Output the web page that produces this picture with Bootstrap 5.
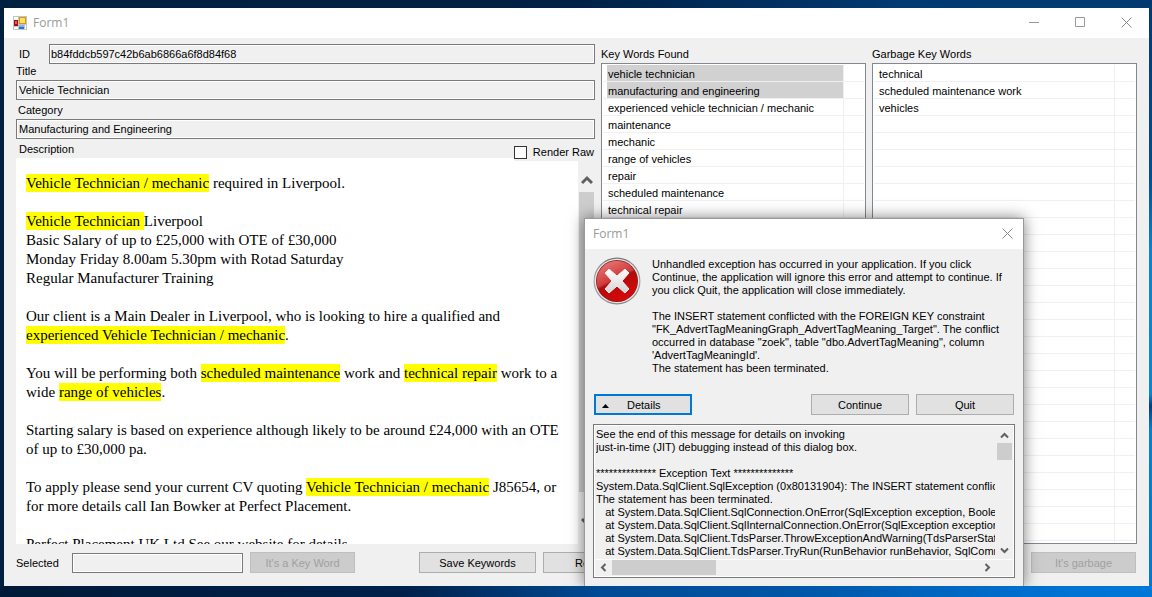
<!DOCTYPE html>
<html lang="en">
<head>
<meta charset="utf-8">
<meta name="viewport" content="width=device-width, initial-scale=1">
<title>Form1</title>
<link rel="stylesheet" href="https://cdn.jsdelivr.net/npm/bootstrap@5.3.0/dist/css/bootstrap.min.css">
<style>
  :root { --face: #f0f0f0; --edge: #7a7a7a; --thumb: #cdcdcd; --arrow: #606060; }
  body {
    font: 11px/13px "Liberation Sans", Arial, sans-serif;
    color: #000;
    padding: 8px 3px 11px 4px;
    background:
      linear-gradient(90deg, #001a38 0, #00204a 35%, #014a94 52%, #0157a8 70%, #0070d0 90%, #0078d8 100%) bottom / 100% 11px no-repeat,
      linear-gradient(#003a70 0, #004f95 30%, #0a84d0 42%, #0786d4 66%, #003f7e 68%, #0780d0 72%, #0078d8 100%) right / 3px 100% no-repeat,
      linear-gradient(90deg, #00203f 0, #002145 50%, #003a72 78%, #003a70 100%) #00203f;
  }
  .win { background: var(--face); }
  .title-bar { background: #fff; height: 30px; font: 12px/16px "Open Sans", "Segoe UI", sans-serif; color: #999; }
  .main-title { padding: 0 0 0 9px; gap: 6px; }
  .cap-btn { width: 46px; height: 30px; border: 0; padding: 0 0 2px; background: none; line-height: 0; }
  .main-title .cap-btn { margin-left: -6px; }
  .form-area { padding: 6px 12px 0 12px; gap: 6px; }
  .col-left { flex: 579 1 0; min-width: 0; }
  .col-list { flex: 265 1 0; min-width: 0; padding-top: 4px; }
  .box-input {
    height: 20px; width: 100%; min-width: 0; border: 1px solid var(--edge); border-radius: 0; outline: 0;
    background: var(--face); box-shadow: inset 0 0 0 1px #fff; padding: 0 2px; color: #000; font: inherit;
  }
  .id-label { width: 33px; padding-left: 3px; flex: none; }
  .id-label + .box-input { padding-left: 1px; }
  .title-label { line-height: 14px; padding-bottom: 2px; }
  .cat-label { line-height: 17px; padding: 2px 2px 0; }
  .desc-head { height: 19px; padding-left: 3px; line-height: 21px; }
  .raw-check { background: var(--face); height: 18px; margin-top: 4px; gap: 6px; padding-right: 1px; position: relative; }
  .raw-check input { appearance: none; width: 13px; height: 13px; border: 1px solid #333; background: #fff; margin: 0; }
  .desc { flex: 1 1 0; min-height: 0; background: #fff; overflow: hidden; }
  .desc-text { font: 15px/19px "Liberation Serif", "Times New Roman", serif; padding: 16px 10px 0; overflow: hidden; }
  .desc-text p { margin: 0 0 19px; }
  .desc-text mark { background: #ff0; padding: 1px 0; color: #000; }
  .vbar { width: 17px; flex: none; background: var(--face); color: var(--arrow); }
  .desc .vbar { padding: 15px 1px 15px; }
  .desc .thumb-v { height: 300px; margin: 5px 0 22px; }
  .thumb-v, .thumb-h { background: var(--thumb); }
  svg { display: block; flex: none; }
  .list-view { flex: 1 1 0; min-height: 0; margin-top: 2px; border: 1px solid #828790; background: #fff; padding: 1px; overflow: hidden; }
  .list-grid {
    height: 100%;
    background:
      linear-gradient(#f0f0f0, #f0f0f0) right 20px top / 1px 100% no-repeat,
      repeating-linear-gradient(transparent 0 16px, #f0f0f0 16px 17px);
  }
  .list-grid table { width: calc(100% - 21px); border-collapse: separate; border-spacing: 0; }
  .list-grid tr { height: 17px; }
  .list-grid td { padding: 0 0 1px 4px; height: 17px; white-space: nowrap; }
  .list-grid td span { display: block; padding: 3px 0 0 1px; height: 16px; }
  .list-grid .picked span { background: #d1d1d1; }
  .foot { padding: 7px 13px 13px 12px; height: 42px; gap: 7px; }
  .sel-label { width: 49px; line-height: 20px; flex: none; }
  .push-btn {
    height: 21px; border: 1px solid #adadad; background: #e1e1e1; color: #000; padding: 1px 0 0; border-radius: 0;
    font: inherit; line-height: 18px; flex: none;
  }
  .push-btn:disabled { background: #ccc; border-color: #bfbfbf; color: #a0a0a0; }
  .push-btn.focused { border: 2px solid #0078d7; line-height: 16px; }
  .w-key { width: 105px; } .w-save { width: 117px; margin-left: 57px; } .w-dlg { width: 98px; }
  .sel-input { width: 171px; }

  /* error window lying over the form */
  .err-win {
    position: absolute; right: 128px; bottom: 11px; width: 440px;
    background: var(--face); border: 1px solid #999; border-bottom-width: 0;
    box-shadow: 0 0 14px rgba(0, 0, 0, .5); clip-path: inset(-20px -20px 0 -20px);
  }
  .err-title { padding-left: 8px; }
  .err-title .cap-btn { width: 31px; }
  .err-msg { padding: 9px 12px 19px 8px; gap: 11px; }
  .err-msg svg { margin-top: -1px; }
  .err-msg p { margin: 0 0 13px; }
  .err-msg p:last-child { margin: 0; }
  .err-btns { padding: 0 9px; gap: 7px; }
  .err-log { margin: 9px 8px 8px; border: 1px solid var(--edge); padding: 2px; box-shadow: inset 0 0 0 1px #fff; }
  .err-log textarea {
    flex: 1 1 0; min-width: 0; height: 132px; border: 0; padding: 1px 0 0; background: none; color: #000;
    resize: none; overflow: hidden; white-space: pre; font: inherit; outline: 0; display: block;
  }
  .err-log .vbar { width: 15px; margin-left: 2px; padding: 4px 0 5px; }
  .err-log .thumb-v { height: 17px; margin: 3px 0 auto; }
  .hbar { height: 16px; border-top: 1px solid #fff; padding-left: 4px; color: var(--arrow); }
  .hbar .thumb-h { width: 104px; height: 15px; margin-left: 5px; }
  .hbar .right-arrow { margin-right: 21px; }
</style>
</head>
<body class="vh-100 d-flex flex-column overflow-hidden position-relative">

<main class="win flex-fill d-flex flex-column">
  <header class="title-bar main-title d-flex align-items-center">
    <svg width="14" height="14" viewBox="0 0 14 14" aria-hidden="true">
      <path fill="#c4c4c4" d="M0 0h14v14H0z"/><path fill="#fff" d="M1 1h4v3H1zM1 11h4v2H1zM12 9h1v4h-1z"/>
      <path fill="#a80f0c" d="M1 4h4v6H1z"/><path fill="#e8584c" d="M2 5h2v3H2z"/>
      <path fill="#d39a12" d="M6 1h7v7H6z"/><path fill="#ffdc68" d="M7 2h5v5H7z"/>
      <path fill="#2d6fd0" d="M6 9h5v4H6z"/><path fill="#7db2f5" d="M6 9h5v2H6z"/>
    </svg>
    <span class="me-auto">Form1</span>
    <button class="cap-btn" type="button" aria-label="Minimize"><svg class="mx-auto" width="10" height="10"><path d="M0 5.500h10" stroke="#999"/></svg></button>
    <button class="cap-btn" type="button" aria-label="Maximize"><svg class="mx-auto" width="10" height="10"><path d="M.5.5h9v9h-9z" stroke="#999" fill="none"/></svg></button>
    <button class="cap-btn" type="button" aria-label="Close"><svg class="mx-auto" width="11" height="11"><path d="M.5.5l10 10m0-10l-10 10" stroke="#888" fill="none"/></svg></button>
  </header>

  <div class="form-area flex-fill d-flex">
    <section class="col-left d-flex flex-column">
      <div class="d-flex align-items-center">
        <label class="id-label" for="adId">ID</label>
        <input class="box-input" id="adId" value="b84fddcb597c42b6ab6866a6f8d84f68" readonly>
      </div>
      <label class="title-label" for="adTitle">Title</label>
      <input class="box-input" id="adTitle" value="Vehicle Technician" readonly>
      <label class="cat-label" for="adCat">Category</label>
      <input class="box-input" id="adCat" value="Manufacturing and Engineering" readonly>
      <div class="desc-head d-flex justify-content-between">
        <span>Description</span>
        <label class="raw-check d-flex align-items-center"><input type="checkbox"> Render Raw</label>
      </div>
      <div class="desc d-flex">
        <article class="desc-text flex-fill">
          <p><mark>Vehicle Technician / mechanic</mark> required in Liverpool.</p>
          <p><mark>Vehicle Technician </mark>Liverpool<br>Basic Salary of up to £25,000 with OTE of £30,000<br>Monday Friday 8.00am 5.30pm with Rotad Saturday<br>Regular Manufacturer Training</p>
          <p>Our client is a Main Dealer in Liverpool, who is looking to hire a qualified and<br><mark>experienced Vehicle Technician / mechanic</mark>.</p>
          <p>You will be performing both <mark>scheduled maintenance</mark> work and <mark>technical repair</mark> work to a<br>wide <mark>range of vehicles</mark>.</p>
          <p>Starting salary is based on experience although likely to be around £24,000 with an OTE<br>of up to £30,000 pa.</p>
          <p>To apply please send your current CV quoting <mark>Vehicle Technician / mechanic</mark> J85654, or<br>for more details call Ian Bowker at Perfect Placement.</p>
          <p>Perfect Placement UK Ltd See our website for details.</p>
        </article>
        <div class="vbar d-flex flex-column">
          <svg class="mx-auto" width="12" height="14"><path d="M1 10l5-5 5 5" fill="none" stroke="currentColor" stroke-width="3"/></svg>
          <div class="thumb-v"></div>
          <svg class="mx-auto" width="12" height="14"><path d="M1 5l5 5 5-5" fill="none" stroke="currentColor" stroke-width="3"/></svg>
        </div>
      </div>
    </section>

    <section class="col-list d-flex flex-column">
      <div>Key Words Found</div>
      <div class="list-view"><div class="list-grid">
        <table aria-label="Key Words Found"><tbody>
          <tr class="picked"><td><span>vehicle technician</span></td></tr>
          <tr class="picked"><td><span>manufacturing and engineering</span></td></tr>
          <tr><td><span>experienced vehicle technician / mechanic</span></td></tr>
          <tr><td><span>maintenance</span></td></tr>
          <tr><td><span>mechanic</span></td></tr>
          <tr><td><span>range of vehicles</span></td></tr>
          <tr><td><span>repair</span></td></tr>
          <tr><td><span>scheduled maintenance</span></td></tr>
          <tr><td><span>technical repair</span></td></tr>
        </tbody></table>
      </div></div>
    </section>

    <section class="col-list d-flex flex-column">
      <div>Garbage Key Words</div>
      <div class="list-view"><div class="list-grid">
        <table aria-label="Garbage Key Words"><tbody>
          <tr><td><span>technical</span></td></tr>
          <tr><td><span>scheduled maintenance work</span></td></tr>
          <tr><td><span>vehicles</span></td></tr>
        </tbody></table>
      </div></div>
    </section>
  </div>

  <footer class="foot d-flex align-items-end">
    <label class="sel-label" for="selWord">Selected</label>
    <input class="box-input sel-input" id="selWord" readonly>
    <button class="push-btn w-key" type="button" disabled>It's a Key Word</button>
    <button class="push-btn w-save" type="button">Save Keywords</button>
    <button class="push-btn w-key" type="button">Remove</button>
    <button class="push-btn w-key ms-auto" type="button" disabled>It's garbage</button>
  </footer>
</main>

<div class="err-win" role="dialog" aria-label="Form1">
  <header class="title-bar err-title d-flex align-items-center justify-content-between">
    <span>Form1</span>
    <button class="cap-btn" type="button" aria-label="Close"><svg class="mx-auto" width="11" height="11"><path d="M.5.5l10 10m0-10l-10 10" stroke="#888" fill="none"/></svg></button>
  </header>
  <div class="err-msg d-flex align-items-start">
    <svg width="48" height="48" viewBox="0 0 48 48" aria-hidden="true">
      <defs>
        <linearGradient id="rim" x2="0" y2="1"><stop stop-color="#777"/><stop offset=".5" stop-color="#aaa"/><stop offset="1" stop-color="#888"/></linearGradient>
        <linearGradient id="red" x1=".2" x2=".7" y2="1"><stop stop-color="#e87a78"/><stop offset=".45" stop-color="#cf3a3a"/><stop offset=".5" stop-color="#b00c0c"/><stop offset="1" stop-color="#dc0808"/></linearGradient>
        <linearGradient id="cross" x2="0" y2="1"><stop stop-color="#fff"/><stop offset="1" stop-color="#d4d4d4"/></linearGradient>
      </defs>
      <circle cx="24" cy="24" r="23.500" fill="url(#rim)"/><circle cx="24" cy="24" r="22.300" fill="#e6e6e6"/>
      <circle cx="24" cy="24" r="21" fill="#8c1a1a"/><circle cx="24" cy="24" r="20.300" fill="url(#red)"/>
      <path d="M16 12l8 7 8-7 4 4-7 8 7 8-4 4-8-7-8 7-4-4 7-8-7-8z" fill="url(#cross)" stroke="#eee" stroke-linejoin="round"/>
    </svg>
    <div>
      <p>Unhandled exception has occurred in your application. If you click<br>Continue, the application will ignore this error and attempt to continue. If<br>you click Quit, the application will close immediately.</p>
      <p>The INSERT statement conflicted with the FOREIGN KEY constraint<br>"FK_AdvertTagMeaningGraph_AdvertTagMeaning_Target". The conflict<br>occurred in database "zoek", table "dbo.AdvertTagMeaning", column<br>'AdvertTagMeaningId'.<br>The statement has been terminated.</p>
    </div>
  </div>
  <div class="err-btns d-flex">
    <button class="push-btn focused w-dlg me-auto d-flex align-items-center" type="button"><svg class="ms-1" width="11" height="5"><path d="M2 5l3.500-4L9 5z"/></svg><span class="ms-3">Details</span></button>
    <button class="push-btn w-dlg" type="button">Continue</button>
    <button class="push-btn w-dlg" type="button">Quit</button>
  </div>
  <div class="err-log">
    <div class="d-flex">
      <textarea readonly wrap="off" aria-label="Exception details">See the end of this message for details on invoking 
just-in-time (JIT) debugging instead of this dialog box.

************** Exception Text **************
System.Data.SqlClient.SqlException (0x80131904): The INSERT statement conflicted with the FOREIGN KEY constraint
The statement has been terminated.
   at System.Data.SqlClient.SqlConnection.OnError(SqlException exception, Boolean breakConnection)
   at System.Data.SqlClient.SqlInternalConnection.OnError(SqlException exception, Boolean breakConnection)
   at System.Data.SqlClient.TdsParser.ThrowExceptionAndWarning(TdsParserStateObject stateObj)
   at System.Data.SqlClient.TdsParser.TryRun(RunBehavior runBehavior, SqlCommand cmdHandler)</textarea>
      <div class="vbar d-flex flex-column">
        <svg class="mx-auto" width="9" height="9"><path d="M1 6.500L4.500 3 8 6.500" fill="none" stroke="currentColor" stroke-width="2"/></svg>
        <div class="thumb-v"></div>
        <svg class="mx-auto" width="9" height="7"><path d="M1 1.500L4.500 5 8 1.500" fill="none" stroke="currentColor" stroke-width="2"/></svg>
      </div>
    </div>
    <div class="hbar d-flex align-items-center">
      <svg width="7" height="9"><path d="M5.500 1L2 4.500 5.500 8" fill="none" stroke="currentColor" stroke-width="2"/></svg>
      <div class="thumb-h me-auto"></div>
      <svg class="right-arrow" width="7" height="9"><path d="M1.500 1L5 4.500 1.500 8" fill="none" stroke="currentColor" stroke-width="2"/></svg>
    </div>
  </div>
</div>

<script src="https://cdn.jsdelivr.net/npm/bootstrap@5.3.0/dist/js/bootstrap.bundle.min.js"></script>
</body>
</html>
